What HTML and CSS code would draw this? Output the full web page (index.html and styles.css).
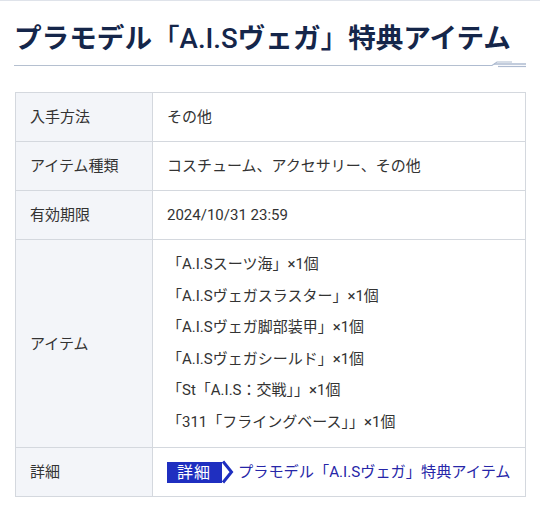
FILE: index.html
```html
<!DOCTYPE html>
<html lang="ja">
<head>
<meta charset="utf-8">
<link rel="stylesheet" href="styles.css">
</head>
<body>
<div class="page">
  <div class="topline"></div>
  <h1 class="title">プラモデル<span class="lt">「A.I.S</span>ヴェガ<span class="lt">」</span>特典アイテム</h1>
  <div class="rule">
    <svg class="deco" width="56" height="8" viewBox="0 0 56 8">
      <path d="M0 5.5H22L27 2H42" fill="none" stroke="#aebbd0" stroke-width="1.2"/>
      <path d="M24 4H56" stroke="#aebbd0" stroke-width="1.5"/>
      <path d="M28 6.5H56" stroke="#aebbd0" stroke-width="1.2"/>
    </svg>
  </div>
  <table class="info">
    <tr><th>入手方法</th><td>その他</td></tr>
    <tr><th>アイテム種類</th><td>コスチューム、アクセサリー、その他</td></tr>
    <tr><th>有効期限</th><td>2024/10/31 23:59</td></tr>
    <tr><th>アイテム</th><td class="items">
      <div>「A.I.Sスーツ海」×1個</div>
      <div>「A.I.Sヴェガスラスター」×1個</div>
      <div>「A.I.Sヴェガ脚部装甲」×1個</div>
      <div>「A.I.Sヴェガシールド」×1個</div>
      <div>「St「A.I.S：交戦」」×1個</div>
      <div>「311「フライングベース」」×1個</div>
    </td></tr>
    <tr><th>詳細</th><td class="detail"><span class="badge">詳細</span><svg class="chev" width="13" height="24" viewBox="0 0 13 24"><path d="M2 1.5L10.5 12L2 22.5" fill="none" stroke="#1f2fc0" stroke-width="3"/></svg><a class="link" href="#">プラモデル「A.I.Sヴェガ」特典アイテム</a></td></tr>
  </table>
</div>
</body>
</html>
```
FILE: styles.css
```css
html, body { margin: 0; padding: 0; background: #fff; }
body { font-family: Roboto, "Noto Sans CJK JP", sans-serif; color: #333; }
.page { width: 540px; }
.topline { height: 1px; background: #dfe3ea; }
.title {
  margin: 0;
  padding: 20px 0 0 14px;
  font-size: 27.6px;
  font-weight: 700;
  line-height: 36px;
  color: #15264a;
  white-space: nowrap;
}
.title .lt { font-weight: 500; }
.rule {
  position: relative;
  margin: 8px 14px 0 14px;
  height: 1px;
  background: #b5c0d0;
  width: 456px;
}
.deco { position: absolute; left: 456px; top: -5px; }
.info {
  margin: 26px 0 0 15px;
  width: 511px;
  border-collapse: collapse;
  font-size: 15px;
}
.info th, .info td {
  border: 1px solid #d4d8de;
  text-align: left;
  font-weight: 400;
  color: #333;
  height: 48px;
  padding: 0 14px;
  line-height: 20px;
}
.info th { width: 108px; background: #f3f5f9; }
.items { padding: 9px 14px 9px 14px !important; }
.items div { line-height: 31.5px; }
.detail { white-space: nowrap; }
.badge {
  display: inline-block;
  background: #1f2fc0;
  color: #fff;
  font-size: 16px;
  line-height: 21px;
  padding: 0 11px 0 10px;
  vertical-align: middle;
  letter-spacing: 1px;
}
.chev { vertical-align: middle; margin-left: -1px; margin-right: 4px; }
.link { color: #2626a8; text-decoration: none; vertical-align: middle; font-size: 15.2px; }
```
